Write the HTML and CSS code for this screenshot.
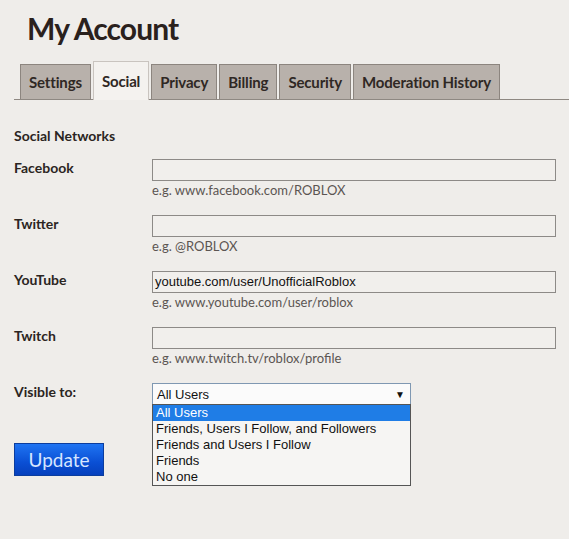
FILE: index.html
```html
<!DOCTYPE html>
<html>
<head>
<meta charset="utf-8">
<link rel="stylesheet" href="styles.css">
</head>
<body>
<div class="page">
  <h1 class="title">My Account</h1>
  <div class="tabs">
    <div class="tab">Settings</div>
    <div class="tab active">Social</div>
    <div class="tab">Privacy</div>
    <div class="tab">Billing</div>
    <div class="tab">Security</div>
    <div class="tab">Moderation History</div>
  </div>
  <div class="content">
    <h2 class="section">Social Networks</h2>
    <div class="row">
      <div class="label">Facebook</div>
      <div class="field">
        <div class="input"></div>
        <div class="hint">e.g. www.facebook.com/ROBLOX</div>
      </div>
    </div>
    <div class="row">
      <div class="label">Twitter</div>
      <div class="field">
        <div class="input"></div>
        <div class="hint">e.g. @ROBLOX</div>
      </div>
    </div>
    <div class="row">
      <div class="label">YouTube</div>
      <div class="field">
        <div class="input">youtube.com/user/UnofficialRoblox</div>
        <div class="hint">e.g. www.youtube.com/user/roblox</div>
      </div>
    </div>
    <div class="row">
      <div class="label">Twitch</div>
      <div class="field">
        <div class="input"></div>
        <div class="hint">e.g. www.twitch.tv/roblox/profile</div>
      </div>
    </div>
    <div class="row">
      <div class="label">Visible to:</div>
      <div class="field">
        <div class="select">
          <span>All Users</span>
          <span class="arrow">&#9660;</span>
          <div class="options">
            <div class="option selected">All Users</div>
            <div class="option">Friends, Users I Follow, and Followers</div>
            <div class="option">Friends and Users I Follow</div>
            <div class="option">Friends</div>
            <div class="option">No one</div>
          </div>
        </div>
      </div>
    </div>
    <div class="actions">
      <div class="button">Update</div>
    </div>
  </div>
</div>
</body>
</html>
```
FILE: styles.css
```css
html, body {
  margin: 0;
  padding: 0;
}
body {
  background: #efedea;
  font-family: Lato, "Open Sans", sans-serif;
  color: #2b2522;
  width: 569px;
  height: 539px;
  overflow: hidden;
}
.page {
  padding-top: 10px;
}
.title {
  margin: 0 0 0 27px;
  font-size: 30px;
  font-weight: 700;
  line-height: 36px;
  color: #2a211d;
  letter-spacing: -0.9px;
}
.tabs {
  display: flex;
  align-items: flex-end;
  gap: 2px;
  margin: 15px 0 0 14px;
  padding-left: 6px;
  border-bottom: 1px solid #8e8882;
  height: 38px;
}
.tab {
  box-sizing: border-box;
  height: 35px;
  padding: 0 8px;
  background: #b8b1ab;
  border: 1px solid #8c857f;
  border-bottom: none;
  font-size: 15px;
  font-weight: 700;
  letter-spacing: -0.15px;
  line-height: 34px;
  color: #2f2824;
}
.tab.active {
  height: 39px;
  margin-bottom: -1px;
  background: #f4f2ef;
  border-color: #c9c4bf;
  line-height: 38px;
}
.content {
  padding: 0 13px 0 14px;
}
.section {
  margin: 27px 0 14px;
  font-size: 14px;
  font-weight: 700;
  line-height: 18px;
}
.row {
  display: flex;
  height: 56px;
}
.label {
  width: 138px;
  font-size: 14px;
  font-weight: 700;
  line-height: 18px;
}
.field {
  flex: 1;
}
.input {
  box-sizing: border-box;
  height: 22px;
  border: 1px solid #8d8a87;
  background: #f1efec;
  font-family: "Liberation Sans", Arial, sans-serif;
  font-size: 13px;
  line-height: 20px;
  padding-left: 2px;
  color: #111;
}
.hint {
  font-size: 13px;
  line-height: 18px;
  color: #5b5552;
}
.select {
  position: relative;
  box-sizing: border-box;
  width: 259px;
  height: 22px;
  border: 1px solid #7f98b2;
  background: #fbfbfb;
  display: flex;
  justify-content: space-between;
  align-items: center;
  padding: 0 5px 0 4px;
  font-family: "Liberation Sans", Arial, sans-serif;
  font-size: 13px;
  color: #111;
}
.arrow {
  font-size: 10px;
  color: #111;
}
.options {
  position: absolute;
  top: 20px;
  left: -1px;
  width: 259px;
  box-sizing: border-box;
  border: 1px solid #555;
  background: #f6f5f3;
}
.option {
  height: 16px;
  line-height: 16px;
  padding-left: 3px;
  color: #111;
}
.option.selected {
  background: #1f7de6;
  color: #fff;
}
.actions {
  margin-top: 4px;
}
.button {
  box-sizing: border-box;
  width: 90px;
  height: 33px;
  background: linear-gradient(#1f74f2, #0a4fd4 60%, #0640bd);
  border: 1px solid #0b3d9e;
  color: #d7e6ff;
  font-size: 19px;
  line-height: 31px;
  text-align: center;
}
```
